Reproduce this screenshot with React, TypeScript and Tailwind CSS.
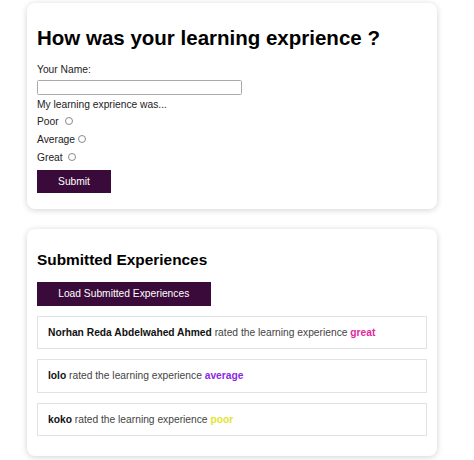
import { useState } from "react";

interface Experience {
  name: string;
  rating: "great" | "average" | "poor";
}

const experiences: Experience[] = [
  { name: "Norhan Reda Abdelwahed Ahmed", rating: "great" },
  { name: "lolo", rating: "average" },
  { name: "koko", rating: "poor" },
];

const ratingColor: Record<Experience["rating"], string> = {
  great: "text-[#e3289b]",
  average: "text-[#8a2be2]",
  poor: "text-[#e2e430]",
};

const options = [
  { label: "Poor", space: true },
  { label: "Average", space: false },
  { label: "Great", space: true },
];

export default function App() {
  const [name, setName] = useState("");
  const [choice, setChoice] = useState("");

  return (
    <div className="min-h-screen bg-white pt-[3px] pl-[27px] font-['Liberation_Sans',Arial,sans-serif] text-[10.25px] text-[#222]">
      <div className="w-[410px] rounded-[8px] bg-white p-[10px] pb-[16px] shadow-[0_1px_6px_rgba(0,0,0,0.18)]">
        <h1 className="mt-[13px] mb-[13.5px] text-[20.5px] font-bold leading-[24px] text-black">
          How was your learning exprience ?
        </h1>
        <label className="block leading-[12px]">Your Name:</label>
        <input
          value={name}
          onChange={(e) => setName(e.target.value)}
          className="mt-[4.5px] block h-[14.7px] w-[205px] rounded-[1.5px] border border-[#a9a9a9] bg-white px-[2px] text-[10px] outline-none"
        />
        <p className="mt-[4px] leading-[12px]">My learning exprience was...</p>
        <div className="flex flex-col">
          {options.map((o) => (
            <label key={o.label} className="mt-[5.8px] flex items-center leading-[12px]">
              <span className="whitespace-pre">{o.label + (o.space ? " " : "")}</span>
              <input
                type="radio"
                name="exp"
                checked={choice === o.label}
                onChange={() => setChoice(o.label)}
                className="ml-[3px] mb-[2px] h-[8px] w-[8px] appearance-none rounded-full border border-[#8a8a8a] bg-white checked:border-[#3a0a3a] checked:bg-[#3a0a3a]"
              />
            </label>
          ))}
        </div>
        <button className="mt-[6px] h-[23.3px] w-[74px] bg-[#3a0a3a] text-[10.25px] text-white">
          Submit
        </button>
      </div>

      <div className="mt-[20px] w-[410px] rounded-[8px] bg-white p-[10px] pb-[20px] shadow-[0_1px_6px_rgba(0,0,0,0.18)]">
        <h2 className="mt-[12px] text-[15.4px] font-bold leading-[18px] text-black">
          Submitted Experiences
        </h2>
        <button className="mt-[13px] h-[23.4px] w-[173.5px] bg-[#3a0a3a] text-[10.25px] text-white">
          Load Submitted Experiences
        </button>
        <div className="mt-[10px] flex flex-col gap-[10px]">
          {experiences.map((e) => (
            <div
              key={e.name}
              className="border border-[#e2e2e2] px-[10px] py-[10px] leading-[11.5px] text-[#444]"
            >
              <span className="font-bold text-[#111]">{e.name}</span> rated the learning
              experience <span className={`font-bold ${ratingColor[e.rating]}`}>{e.rating}</span>
            </div>
          ))}
        </div>
      </div>
    </div>
  );
}
